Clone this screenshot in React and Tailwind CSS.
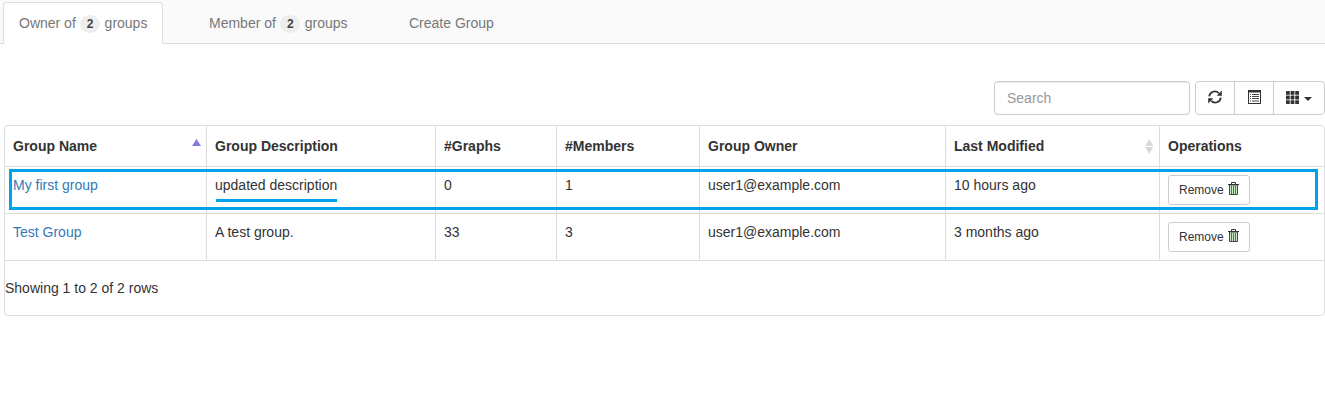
const columns = [
  { label: 'Group Name', sort: 'asc' },
  { label: 'Group Description' },
  { label: '#Graphs' },
  { label: '#Members' },
  { label: 'Group Owner' },
  { label: 'Last Modified', sort: 'both' },
  { label: 'Operations' },
];

const rows = [
  ['My first group', 'updated description', '0', '1', 'user1@example.com', '10 hours ago'],
  ['Test Group', 'A test group.', '33', '3', 'user1@example.com', '3 months ago'],
];

const gridCols = 'grid grid-cols-[202px_229px_121px_143px_246px_214px_164px]';

function Badge({ children }) {
  return (
    <span className="mx-[4.4px] mt-0.5 inline-flex h-[18px] w-5 items-center justify-center rounded-[10px] bg-[#eeeeee] text-xs font-bold text-[#444444]">
      {children}
    </span>
  );
}

function RefreshIcon() {
  return (
    <svg width="14" height="14" viewBox="0 0 14 14" fill="none" stroke="#333" strokeWidth="1.8">
      <path d="M1.2 6.4A5.6 5.6 0 0 1 10.8 3.2M12.8 7.6A5.6 5.6 0 0 1 3.2 10.8" />
      <path d="M13.8 0.6V5.7H8.7ZM0.2 13.4V8.3H5.3Z" fill="#333" stroke="none" />
    </svg>
  );
}

function ListIcon() {
  return (
    <svg width="13" height="14" viewBox="0 0 13 14">
      <path d="M0 0H13V14H0Z" fill="#333" />
      <path d="M1 2.5H12V13H1Z" fill="#fff" />
      <path d="M2 4H3V5H2ZM4 4H11V5H4ZM2 6H3V7H2ZM4 6H11V7H4ZM2 8H3V9H2ZM4 8H11V9H4ZM2 10.5H3V11.5H2ZM4 10.5H11V11.5H4Z" fill="#4a4a4a" />
    </svg>
  );
}

function GridIcon() {
  return (
    <svg width="13" height="13" viewBox="0 0 13 13" fill="#333">
      {[0, 4.6, 9.2].map((x) =>
        [0, 4.6, 9.2].map((y) => <rect key={`${x}-${y}`} x={x} y={y} width="3.8" height="3.8" rx="0.4" />)
      )}
    </svg>
  );
}

function TrashIcon() {
  return (
    <svg className="mb-[3px]" width="11" height="13" viewBox="0 0 11 13">
      <path d="M1.5 3V12.5H9.5V3Z" fill="#c9e8c6" stroke="#333" strokeWidth="0.9" />
      <path d="M3.5 4V12M5.5 4V12M7.5 4V12" stroke="#333" strokeWidth="0.7" />
      <path d="M0 2.5H11M3.5 2V0.5H7.5V2" fill="none" stroke="#333" />
    </svg>
  );
}

function SortIcon({ type }) {
  return type === 'asc' ? (
    <svg className="mb-[7px]" width="9" height="7" viewBox="0 0 9 7">
      <path d="M4.5 0L9 7H0Z" fill="#8080d8" />
    </svg>
  ) : (
    <svg width="9" height="15" viewBox="0 0 9 15">
      <path d="M4.25 0L8.25 7H0.25ZM0.25 8H8.25L4.25 15Z" fill="#d8d8d8" />
    </svg>
  );
}

export default function App() {
  return (
    <div className="h-[419px] w-[1325px] overflow-hidden bg-white font-['Liberation_Sans',Arial,sans-serif] text-sm leading-5 text-[#333333]">
      <nav className="flex h-11 items-end border-b border-[#dddddd] bg-[#fafafa] pl-[3px] text-[#777777]">
        <a className="-mb-px flex h-[42px] w-[160px] items-center rounded-t border border-b-0 border-[#dddddd] bg-white pb-0.5 pl-[15px]">
          Owner of <Badge>2</Badge> groups
        </a>
        <a className="ml-[31px] flex h-[41px] w-[168px] items-center pl-[15px]">
          Member of <Badge>2</Badge> groups
        </a>
        <a className="ml-8 flex h-[41px] items-center px-[15px]">Create Group</a>
      </nav>

      <div className="mt-[37px] flex h-[34px] justify-end gap-[5px]">
        <input
          className="w-[196px] rounded border border-[#cccccc] px-3 shadow-[inset_0_1px_1px_rgba(0,0,0,0.075)] outline-none placeholder:text-[#999999]"
          placeholder="Search"
        />
        <div className="flex w-[130px] rounded border border-[#cccccc]">
          <button className="flex w-[39px] items-center justify-center border-r border-[#cccccc] pb-[2px]"><RefreshIcon /></button>
          <button className="flex w-[39px] items-center justify-center border-r border-[#cccccc] pb-[2px]"><ListIcon /></button>
          <button className="flex flex-1 items-center justify-center gap-[5px] pb-[2px]">
            <GridIcon />
            <svg className="mt-[3px]" width="8" height="4" viewBox="0 0 8 4"><path d="M0 0H8L4 4Z" fill="#333" /></svg>
          </button>
        </div>
      </div>

      <div className="relative ml-1 mt-2.5 h-[191px] w-[1321px] rounded border border-[#dddddd]">
        <div className={`${gridCols} h-[41px] border-b border-[#dddddd] font-bold`}>
          {columns.map((c) => (
            <div key={c.label} className="flex items-center justify-between border-r border-[#dddddd] pl-2 pr-[5px] last:border-r-0">
              {c.label}
              {c.sort && <SortIcon type={c.sort} />}
            </div>
          ))}
        </div>
        {rows.map((row) => (
          <div key={row[0]} className={`${gridCols} h-[47px] border-b border-[#dddddd]`}>
            {row.map((cell, i) => (
              <div key={i} className="border-r border-[#dddddd] p-2">
                {i === 0 ? <a className="text-[#337ab7]">{cell}</a> : cell}
              </div>
            ))}
            <div className="p-2">
              <button className="flex h-[30px] w-[82px] items-center rounded-[3px] border border-[#cccccc] bg-white pl-2.5 text-xs">
                <span className="w-[49px] text-left">Remove</span>
                <TrashIcon />
              </button>
            </div>
          </div>
        ))}
        <div className="pt-[17px]">Showing 1 to 2 of 2 rows</div>
        <div className="pointer-events-none absolute left-1 top-[43px] h-[41px] w-[1309px] border-[3px] border-[#00a2e8]" />
        <div className="pointer-events-none absolute left-[211px] top-[73px] h-[3px] w-[121px] bg-[#00a2e8]" />
      </div>
    </div>
  );
}
